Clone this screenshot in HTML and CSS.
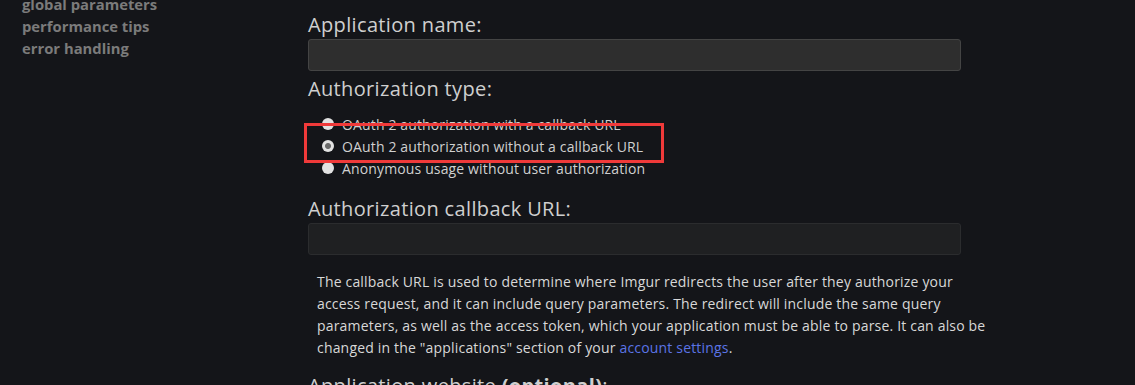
FILE: index.html
```html
<!DOCTYPE html>
<html lang="en">
<head>
  <meta charset="UTF-8" />
  <meta name="viewport" content="width=device-width, initial-scale=1.0" />
  <title>Register an application</title>
  <link rel="stylesheet" href="styles.css">
</head>
<body>
  <div class="page">
    <ul class="sidebar">
      <li>global parameters</li>
      <li>performance tips</li>
      <li>error handling</li>
    </ul>

    <form class="main">
      <label class="field-label">Application name:</label>
      <div class="input"></div>

      <label class="field-label">Authorization type:</label>
      <div class="radios">
        <div class="radio-row"><span class="radio"></span>OAuth 2 authorization with a callback URL</div>
        <div class="radio-row"><span class="radio checked"></span>OAuth 2 authorization without a callback URL</div>
        <div class="radio-row"><span class="radio"></span>Anonymous usage without user authorization</div>
        <div class="highlight"></div>
      </div>

      <label class="field-label">Authorization callback URL:</label>
      <div class="input disabled"></div>

      <p class="help">The callback URL is used to determine where Imgur redirects the user after they authorize your access request, and it can include query parameters. The redirect will include the same query parameters, as well as the access token, which your application must be able to parse. It can also be changed in the "applications" section of your <a href="#">account settings</a>.</p>

      <label class="field-label">Application website <b>(optional)</b>:</label>
    </form>
  </div>
</body>
</html>
```

FILE: styles.css
```css
body {
  margin: 0;
  background: #141519;
  color: #d2d2d2;
  font-family: 'Open Sans', sans-serif;
  overflow: hidden;
}
.page {
  display: flex;
  align-items: flex-start;
  height: 385px;
}
.sidebar {
  list-style: none;
  margin: -7px 0 0 0;
  padding: 0 0 0 22px;
  width: 286px;
  flex-shrink: 0;
}
.sidebar li {
  font-size: 14.8px;
  font-weight: bold;
  color: #7b7b7b;
  line-height: 22px;
}
.main {
  display: block;
  width: 653px;
  flex-shrink: 0;
  padding-top: 11px;
}
.field-label {
  display: block;
  font-size: 20px;
  line-height: 28px;
  letter-spacing: 0.35px;
  color: #cfcfcf;
}
.field-label b {
  font-weight: bold;
}
.input {
  height: 30px;
  margin-bottom: 4px;
  background: #2e2e2e;
  border: 1px solid #444;
  border-radius: 3px;
}
.input.disabled {
  background: #1f2022;
  border-color: #2b2c2e;
  margin-bottom: 16px;
}
.radios {
  position: relative;
  padding: 11px 0 0 14px;
  margin-bottom: 15px;
}
.radio-row {
  display: flex;
  align-items: center;
  gap: 8px;
  font-size: 14px;
  line-height: 22px;
  letter-spacing: 0.14px;
  color: #d0d0d0;
}
.radio {
  width: 12px;
  height: 12px;
  flex-shrink: 0;
  border-radius: 50%;
  background: #e2e2e2;
  position: relative;
  top: -1px;
}
.radio.checked {
  background: radial-gradient(circle, #6a6a6a 0 2.5px, #e2e2e2 3.5px);
}
.highlight {
  position: absolute;
  left: -4px;
  top: 20px;
  width: 354px;
  height: 34px;
  border: 3px solid #f03a3a;
}
.help {
  margin: 0 -31px 13px 0;
  padding: 0 0 0 9px;
  font-size: 14px;
  line-height: 22px;
  letter-spacing: 0.18px;
  color: #d8d8d8;
}
.help a {
  color: #5b74e6;
  text-decoration: none;
}
```
